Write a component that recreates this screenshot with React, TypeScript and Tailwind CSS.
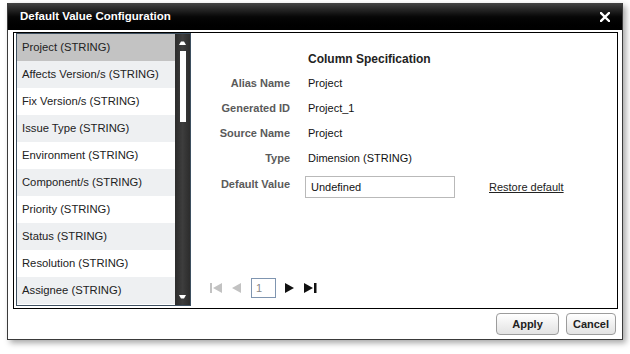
import { ReactNode } from "react";

const columns = [
    "Project (STRING)",
    "Affects Version/s (STRING)",
    "Fix Version/s (STRING)",
    "Issue Type (STRING)",
    "Environment (STRING)",
    "Component/s (STRING)",
    "Priority (STRING)",
    "Status (STRING)",
    "Resolution (STRING)",
    "Assignee (STRING)",
];

const specs: [string, string][] = [
    ["Alias Name", "Project"],
    ["Generated ID", "Project_1"],
    ["Source Name", "Project"],
    ["Type", "Dimension (STRING)"],
];

function SpecRow({ label, children }: { label: string; children: ReactNode }) {
    return (
        <div className="flex h-[25px] items-center">
            <div className="w-[99px] text-right text-[11px] font-bold text-[#5a5a5a]">{label}</div>
            <div className="ml-[18px] text-[11px] text-[#111]">{children}</div>
        </div>
    );
}

function Button({ label, width }: { label: string; width: string }) {
    return (
        <button
            className={`${width} h-[22px] rounded-[4px] border border-[#9c9c9c] bg-gradient-to-b from-white to-[#e2e2e2] text-[11px] font-bold text-[#222]`}
        >
            {label}
        </button>
    );
}

export default function App() {
    return (
        <div className="w-[630px] h-[354px] bg-white pt-[3px] pl-[7px] font-['Liberation_Sans',Arial,sans-serif]">
            <div className="w-[616px] h-[337px] flex flex-col border-x border-b border-[#3a3a3a] shadow-[3px_3px_6px_rgba(0,0,0,0.35)]">
                {/* title bar */}
                <div className="h-[27px] flex items-center justify-between pl-[12px] pr-[12px] bg-gradient-to-b from-[#454545] via-[#080808] to-black">
                    <span className="text-[11.5px] font-bold text-white">Default Value Configuration</span>
                    <svg width="10" height="10" viewBox="0 0 10 10">
                        <path d="M1 1 L9 9 M9 1 L1 9" stroke="white" strokeWidth="2.4" strokeLinecap="square" />
                    </svg>
                </div>

                <div className="flex-1 flex flex-col bg-white pt-[2px] pl-[5px] pr-[4px]">
                    <div className="h-[277px] flex border border-black pl-[2px]">
                        {/* column list */}
                        <div className="w-[175px] h-[273px] flex border border-[#3d4f60]">
                            <div className="flex-1 flex flex-col">
                                {columns.map((c, i) => (
                                    <div
                                        key={c}
                                        className={`h-[27px] flex items-center pl-[5px] text-[11.25px] text-[#222] ${
                                            i === 0 ? "bg-[#c3c3c3]" : i % 2 === 1 ? "bg-[#eef0f2]" : "bg-white"
                                        }`}
                                    >
                                        {c}
                                    </div>
                                ))}
                            </div>
                            <div className="w-[15px] flex flex-col items-center bg-gradient-to-r from-[#2c2c2c] via-[#3d3d3d] to-[#2c2c2c]">
                                <svg width="7" height="4" viewBox="0 0 7 4" className="mt-[7px]">
                                    <path d="M0 4 L2 0.5 L5 0.5 L7 4 Z" fill="white" />
                                </svg>
                                <div className="mt-[6px] w-[6px] h-[71px] bg-white" />
                                <svg width="7" height="4" viewBox="0 0 7 4" className="mt-auto mb-[6px]">
                                    <path d="M0 0 L2 3.5 L5 3.5 L7 0 Z" fill="white" />
                                </svg>
                            </div>
                        </div>

                        {/* specification */}
                        <div className="flex-1 flex flex-col pt-[13px]">
                            <div className="flex h-[25px] items-center">
                                <div className="w-[99px]" />
                                <div className="ml-[18px] text-[12px] font-bold text-[#222]">Column Specification</div>
                            </div>
                            {specs.map(([l, v]) => (
                                <SpecRow key={l} label={l}>
                                    {v}
                                </SpecRow>
                            ))}
                            <div className="flex items-start pt-[5px]">
                                <div className="w-[99px] text-right text-[11px] font-bold text-[#5a5a5a]">Default Value</div>
                                <div className="ml-[15px] w-[150px] h-[22px] flex items-center border border-[#b9b9b9] pl-[5px] text-[11px] text-[#111]">
                                    Undefined
                                </div>
                                <span className="ml-[34px] pt-[3px] text-[11px] text-[#222] underline">Restore default</span>
                            </div>

                            <div className="mt-auto mb-[10px] flex items-center pl-[19px]">
                                <svg width="12" height="10" viewBox="0 0 12 10">
                                    <rect x="0" y="0" width="2" height="10" fill="#c2c2c2" />
                                    <path d="M12 0 L3 5 L12 10 Z" fill="#c2c2c2" />
                                </svg>
                                <svg width="9" height="10" viewBox="0 0 9 10" className="ml-[10px]">
                                    <path d="M9 0 L0 5 L9 10 Z" fill="#c2c2c2" />
                                </svg>
                                <div className="ml-[10px] w-[25px] h-[20px] border border-[#7f95b0] pl-[4px] text-[11px] leading-[18px] text-[#888]">
                                    1
                                </div>
                                <svg width="9" height="10" viewBox="0 0 9 10" className="ml-[9px]">
                                    <path d="M0 0 L9 5 L0 10 Z" fill="#111" />
                                </svg>
                                <svg width="13" height="10" viewBox="0 0 13 10" className="ml-[10px]">
                                    <path d="M0 0 L9 5 L0 10 Z" fill="#111" />
                                    <rect x="10" y="0" width="2.5" height="10" fill="#111" />
                                </svg>
                            </div>
                        </div>
                    </div>

                    {/* footer */}
                    <div className="flex-1 flex items-center justify-end gap-[7px] pr-[2px]">
                        <Button label="Apply" width="w-[63px]" />
                        <Button label="Cancel" width="w-[50px]" />
                    </div>
                </div>
            </div>
        </div>
    );
}
